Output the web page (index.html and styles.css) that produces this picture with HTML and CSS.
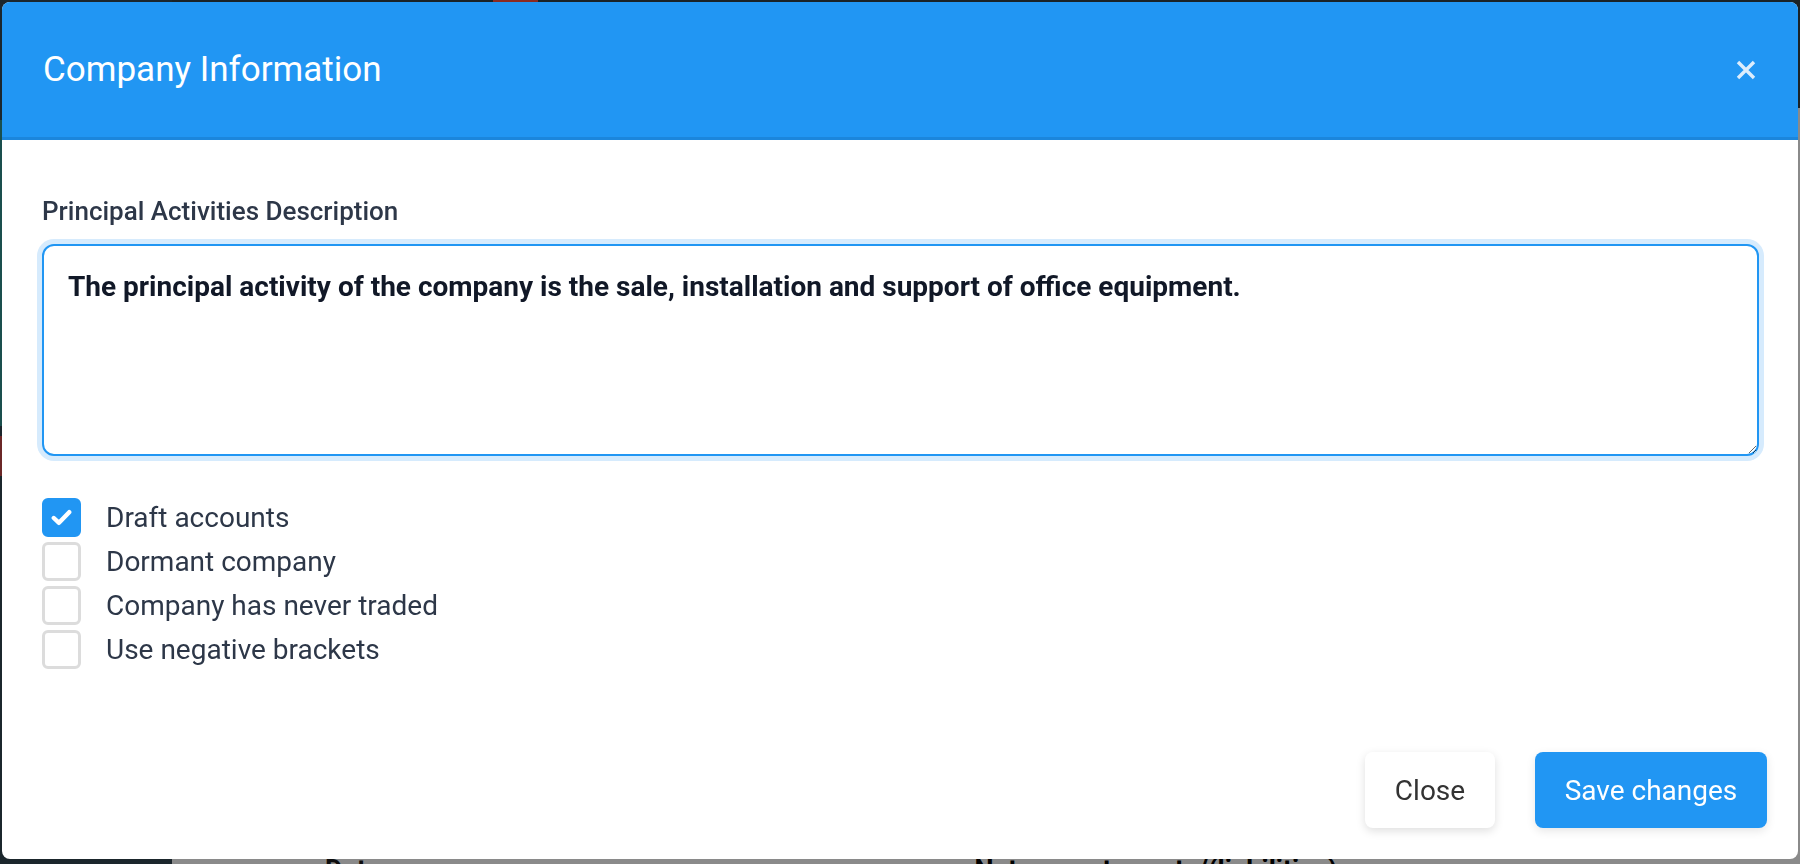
FILE: index.html
```html
<!DOCTYPE html>
<html lang="en">
<head>
<meta charset="utf-8">
<title>Company Information</title>
<link rel="stylesheet" href="styles.css">
</head>
<body>
<div class="page">
  <aside class="side">
    <div class="side-teal"></div>
    <div class="side-red"></div>
  </aside>
  <main class="main">
    <div class="topbar"><span class="pill"></span></div>
    <div class="content">
      <div class="peek-row">
        <span class="peek-dates">Dates</span>
        <span class="peek-net">Net current assets/(liabilities)</span>
      </div>
    </div>
  </main>
</div>

<div class="modal" role="dialog" aria-labelledby="modal-title">
  <header class="modal-header">
    <h1 class="modal-title" id="modal-title">Company Information</h1>
    <button class="modal-close" type="button" aria-label="Close">
      <svg width="20" height="20" viewBox="0 0 20 20" aria-hidden="true">
        <path d="M2 2 L18 18 M18 2 L2 18" stroke="currentColor" stroke-width="3.4" stroke-linecap="butt" fill="none"/>
      </svg>
    </button>
  </header>
  <section class="modal-body">
    <label class="field-label" for="desc">Principal Activities Description</label>
    <textarea class="field-text" id="desc">The principal activity of the company is the sale, installation and support of office equipment.</textarea>
    <div class="checks">
      <label class="check-row">
        <span class="box box-on">
          <svg width="21" height="17" viewBox="0 0 21 17" aria-hidden="true">
            <path d="M2.8 9 L8 13.8 L18.2 3.2" stroke="#fff" stroke-width="4.4" fill="none" stroke-linecap="round" stroke-linejoin="round"/>
          </svg>
        </span>
        <span class="check-text">Draft accounts</span>
      </label>
      <label class="check-row">
        <span class="box"></span>
        <span class="check-text">Dormant company</span>
      </label>
      <label class="check-row">
        <span class="box"></span>
        <span class="check-text">Company has never traded</span>
      </label>
      <label class="check-row">
        <span class="box"></span>
        <span class="check-text">Use negative brackets</span>
      </label>
    </div>
  </section>
  <footer class="modal-footer">
    <button class="btn btn-light" type="button">Close</button>
    <button class="btn btn-primary" type="button">Save changes</button>
  </footer>
</div>
</body>
</html>
```

FILE: styles.css
```css
* { box-sizing: border-box; }

html, body {
  margin: 0;
  height: 100%;
  overflow: hidden;
}

body {
  background: #1b2328;
  font-family: Roboto, "Liberation Sans", Arial, sans-serif;
}

/* ---------- dimmed page behind the dialog ---------- */
.page {
  display: flex;
  height: 100vh;
}

.side {
  width: 172px;
  flex: none;
  background: #1b262c;
  display: flex;
  flex-direction: column;
}

.side-teal {
  height: 306px;
  margin-top: 120px;
  background: #1a4f4d;
}

.side-red {
  height: 40px;
  margin-top: 10px;
  background: #6b2727;
}

.main {
  flex: 1;
  display: flex;
  flex-direction: column;
}

.topbar {
  height: 108px;
  background: #1a2226;
  padding-left: 321px;
}

.pill {
  display: block;
  width: 45px;
  height: 8px;
  background: #8b2a22;
  border-radius: 0 0 6px 6px;
}

.content {
  flex: 1;
  background: #8a8a8a;
  display: flex;
  flex-direction: column;
  justify-content: flex-end;
  overflow: hidden;
}

.peek-row {
  display: flex;
  align-items: flex-start;
  height: 7px;
  padding-left: 153px;
  white-space: nowrap;
}

.peek-dates {
  font-size: 27px;
  font-weight: 700;
  color: #0d0d0d;
  line-height: 1;
}

.peek-net {
  margin-left: 580px;
  font-size: 27px;
  font-weight: 700;
  color: #000;
  line-height: 1;
}

/* ---------- dialog ---------- */
.modal {
  position: fixed;
  top: 2px;
  left: 2px;
  width: 1796px;
  height: 857px;
  background: #fff;
  border-radius: 8px;
  overflow: hidden;
  display: flex;
  flex-direction: column;
}

.modal-header {
  flex: none;
  height: 138px;
  background: #2196f3;
  border-bottom: 3px solid #1b86dc;
  display: flex;
  align-items: center;
  justify-content: space-between;
  padding: 0 42px 0 41px;
}

.modal-title {
  margin: 0;
  font-size: 35px;
  font-weight: 400;
  line-height: 42px;
  color: #fff;
}

.modal-close {
  border: 0;
  background: none;
  padding: 0;
  width: 20px;
  height: 20px;
  color: #dcedfc;
  display: flex;
}

.modal-body {
  flex: 1;
  padding: 56px 39px 0 40px;
  display: flex;
  flex-direction: column;
}

.field-label {
  display: block;
  font-size: 26px;
  font-weight: 500;
  line-height: 30px;
  color: #2d3748;
  margin-bottom: 18px;
}

.field-text {
  display: block;
  width: 100%;
  height: 212px;
  border: 2px solid #2196f3;
  border-radius: 12px;
  box-shadow: 0 0 0 5px #d6ebfd;
  padding: 21px 24px 19px;
  font-family: Roboto, "Liberation Sans", Arial, sans-serif;
  font-size: 28px;
  font-weight: 700;
  line-height: 1.4;
  color: #111827;
  background: #fff;
  outline: none;
  resize: vertical;
}

.checks {
  margin-top: 42px;
  display: flex;
  flex-direction: column;
  gap: 5px;
}

.check-row {
  display: flex;
  align-items: center;
  gap: 25px;
}

.box {
  width: 39px;
  height: 39px;
  border: 3px solid #dcdcdc;
  border-radius: 6px;
  background: #fff;
  display: flex;
  align-items: center;
  justify-content: center;
  flex: none;
}

.box-on {
  background: #2196f3;
  border-color: #2196f3;
}

.check-text {
  font-size: 28px;
  line-height: 39px;
  color: #2d3748;
}

.modal-footer {
  flex: none;
  display: flex;
  justify-content: flex-end;
  gap: 40px;
  padding: 0 31px 31px 0;
}

.btn {
  height: 76px;
  border: 0;
  border-radius: 8px;
  padding: 0;
  font-family: Roboto, "Liberation Sans", Arial, sans-serif;
  font-size: 28px;
  font-weight: 400;
  white-space: nowrap;
  text-align: center;
}

.btn-light {
  width: 130px;
  background: #fff;
  color: #333;
  box-shadow: 0 3px 10px rgba(0, 0, 0, 0.13);
}

.btn-primary {
  width: 232px;
  background: #2196f3;
  color: #fff;
  box-shadow: 0 3px 10px rgba(0, 0, 0, 0.10);
}
```
